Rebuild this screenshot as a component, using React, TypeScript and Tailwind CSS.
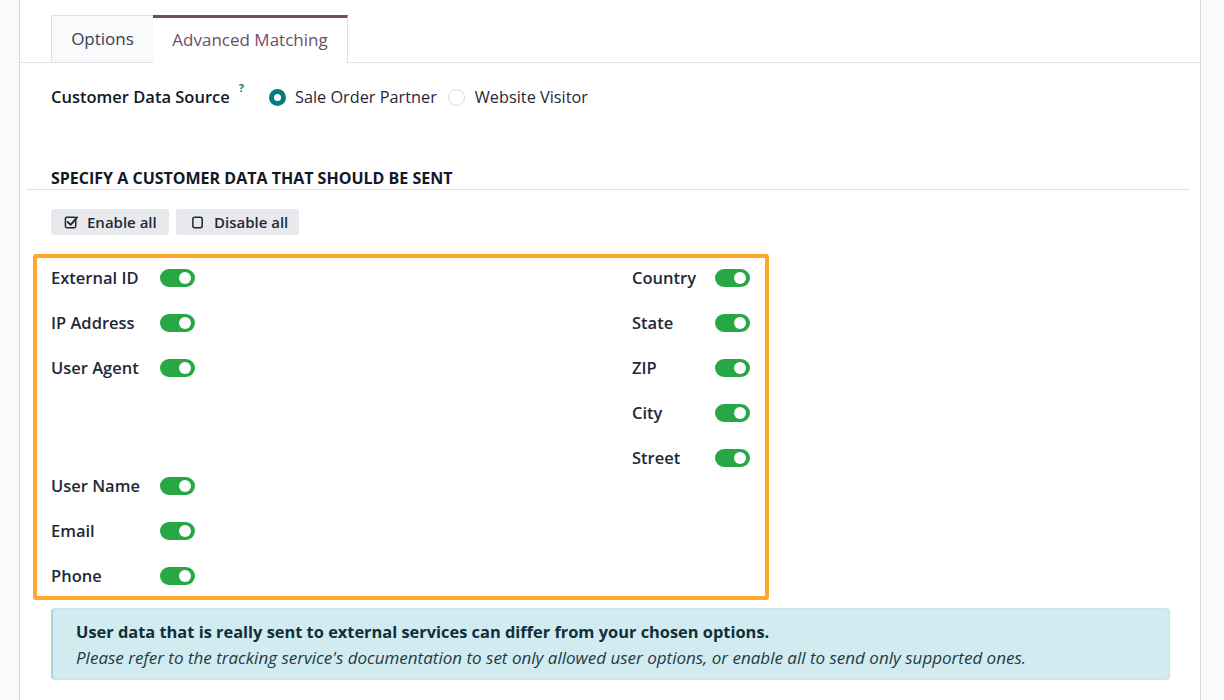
import React from "react";

const font = { fontFamily: "'Open Sans', 'Noto Sans', sans-serif" };

function Toggle() {
  return (
    <span className="relative inline-flex h-[18px] w-[35px] items-center rounded-full bg-[#28a745]">
      <span className="absolute right-[4px] h-[12px] w-[12px] rounded-full bg-white" />
    </span>
  );
}

function Row({ label, labelW, className = "" }: { label: string; labelW: string; className?: string }) {
  return (
    <div className={`flex h-[40px] items-center ${className}`}>
      <span className={`${labelW} text-[16.5px] font-semibold text-[#1f2937]`}>{label}</span>
      <Toggle />
    </div>
  );
}

function CheckSquareIcon() {
  return (
    <svg width="15" height="15" viewBox="0 0 16 16" fill="none">
      <rect x="1.5" y="2.5" width="11" height="11" rx="1.5" stroke="#1f2937" strokeWidth="1.6" />
      <path d="M4 7.5 L7 10.5 L14 2.5" stroke="#1f2937" strokeWidth="2" fill="none" strokeLinecap="round" strokeLinejoin="round" />
    </svg>
  );
}

function SquareIcon() {
  return (
    <svg width="14" height="15" viewBox="0 0 14 16" fill="none">
      <rect x="1.5" y="2.5" width="10" height="11" rx="2" stroke="#1f2937" strokeWidth="1.6" />
    </svg>
  );
}

export default function App() {
  return (
    <div className="flex min-h-[700px] w-[1224px] bg-[#f9fafb]" style={font}>
      <div className="ml-[19px] w-[1182px] border-x border-[#d8dadd] bg-white">
        {/* Tabs */}
        <div className="flex border-b border-[#dee2e6] pl-[31px] pt-[15px]">
          <div className="flex h-[47px] w-[102px] items-center justify-center border-l border-t border-[#dee2e6] bg-[#f9fafb] text-[17px] text-[#374151]">
            Options
          </div>
          <div className="-mb-px flex h-[48px] w-[195px] items-center justify-center border-r border-t-[3px] border-r-[#dee2e6] border-t-[#714b67] bg-white pb-[2px] text-[17px] text-[#714b67]">
            Advanced Matching
          </div>
        </div>

        {/* Customer data source */}
        <div className="mt-[22px] flex h-[24px] items-center pl-[31px]">
          <span className="text-[16.5px] font-semibold text-[#111827]">Customer Data Source</span>
          <sup className="ml-[9px] -mt-[8px] text-[11px] font-bold text-[#017e84]">?</sup>
          <span className="ml-[25px] flex h-[17px] w-[17px] items-center justify-center rounded-full bg-[#017e84]">
            <span className="h-[7px] w-[7px] rounded-full bg-white" />
          </span>
          <span className="ml-[9px] text-[16.3px] text-[#1f2937]">Sale Order Partner</span>
          <span className="ml-[11px] h-[17px] w-[17px] rounded-full border border-[#d8dadd] bg-white" />
          <span className="ml-[10px] text-[16.3px] text-[#1f2937]">Website Visitor</span>
        </div>

        {/* Section header */}
        <div className="ml-[6px] mr-[10px] mt-[58px] border-b border-[#dee2e6] pb-[1px] pl-[25px] pt-[1px] leading-[20px]">
          <span className="text-[16px] font-bold uppercase text-[#111827]">
            Specify a customer data that should be sent
          </span>
        </div>

        {/* Buttons */}
        <div className="mt-[19px] flex gap-[7px] pl-[31px]">
          <button className="flex h-[26px] w-[118px] items-center gap-[8px] rounded-[3px] bg-[#e7e9ed] pl-[13px] text-[15px] font-semibold text-[#1f2937]">
            <CheckSquareIcon />
            Enable all
          </button>
          <button className="flex h-[26px] w-[123px] items-center gap-[9px] rounded-[3px] bg-[#e7e9ed] pl-[15px] text-[15px] font-semibold text-[#1f2937]">
            <SquareIcon />
            Disable all
          </button>
        </div>

        {/* Orange box */}
        <div className="ml-[13px] mt-[19px] flex w-[736px] justify-between rounded-[3px] border-4 border-[#ffa62b] pl-[14px] pr-[15px]">
          <div className="flex flex-col gap-[5px]">
            <Row label="External ID" labelW="w-[109px]" />
            <Row label="IP Address" labelW="w-[109px]" />
            <Row label="User Agent" labelW="w-[109px]" />
            <Row label="User Name" labelW="w-[109px]" className="mt-[73px]" />
            <Row label="Email" labelW="w-[109px]" />
            <Row label="Phone" labelW="w-[109px]" />
          </div>
          <div className="flex flex-col gap-[5px]">
            <Row label="Country" labelW="w-[83px]" />
            <Row label="State" labelW="w-[83px]" />
            <Row label="ZIP" labelW="w-[83px]" />
            <Row label="City" labelW="w-[83px]" />
            <Row label="Street" labelW="w-[83px]" />
          </div>
        </div>

        {/* Alert */}
        <div className="ml-[31px] mt-[8px] w-[1119px] rounded-[4px] border border-l-[2px] border-[#c5e6ec] border-l-[#a6d7e2] bg-[#d1ebf0] px-[23px] pb-[8px] pt-[10px]">
          <div className="text-[16.4px] font-bold leading-[26px] text-[#0f2f3a]">
            User data that is really sent to external services can differ from your chosen options.
          </div>
          <div className="text-[17px] italic leading-[26px] text-[#1f3a44]">
            Please refer to the tracking service's documentation to set only allowed user options, or enable all to send only supported ones.
          </div>
        </div>
      </div>
    </div>
  );
}
